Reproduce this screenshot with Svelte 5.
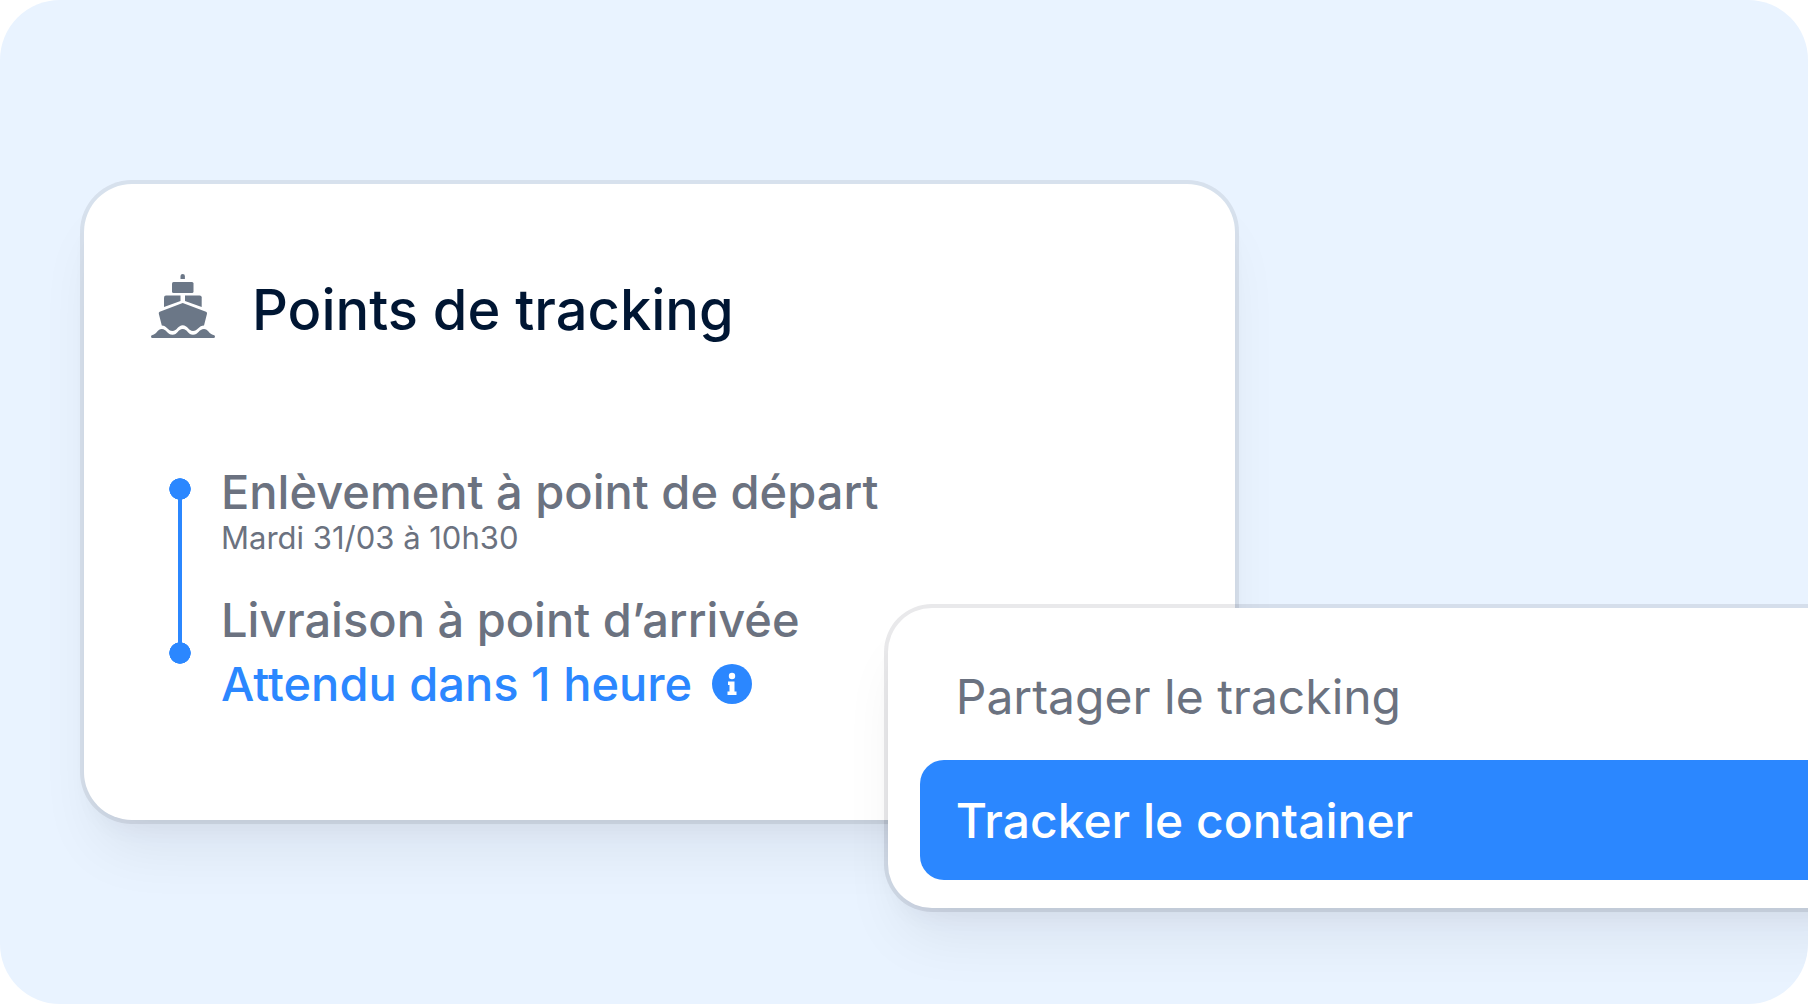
<script>
    const points = [
        { title: 'Enlèvement à point de départ', date: 'Mardi 31/03 à 10h30' },
        { title: 'Livraison à point d’arrivée', expected: 'Attendu dans 1 heure' }
    ];

    const actions = ['Partager le tracking', 'Tracker le container'];

    let selected = $state('Tracker le container');
</script>

<main class="stage">
    <section class="card">
        <header class="card-header">
            <svg class="ship" viewBox="0 0 64 64" aria-hidden="true">
                <path d="M29.500 5V2Q29.500 0 31.700 0T33.900 2V5Z" />
                <rect x="21" y="8" width="21.500" height="11" rx="1.500" />
                <path d="M13 33V23.500Q13 21.500 15 21.500H29.500V27Z" />
                <path d="M34 21.500H48.700Q50.700 21.500 50.700 23.500V33L34 27Z" />
                <path d="M31.700 29L55 37.800Q56.300 38.500 56 39.800L53 51.500C48 51.500 46.500 57 42 57C37.500 57 36.500 51.300 31.700 51.300C27 51.300 26 57 21.500 57C17 57 15.500 51.500 10.800 51.500L7.800 39.800Q7.500 38.500 8.700 37.800Z" />
                <path d="M1.500 61C5.500 60.500 6.500 55 10.800 55C15.500 55 16.500 60.800 21.500 60.800C26.500 60.800 27 55 31.700 55C36.500 55 37 60.800 42 60.800C47 60.800 48 55 53 55C57 55 58.500 60.500 62.500 61Q64 61.200 64 62.500Q64 64 62.500 64H1.500Q0 64 0 62.500Q0 61.200 1.500 61Z" />
            </svg>
            <h1>Points de tracking</h1>
        </header>

        <div class="timeline">
            <div class="rail"></div>
            <ol class="points">
                {#each points as point}
                    <li>
                        <h2>{point.title}</h2>
                        {#if point.date}
                            <p class="date">{point.date}</p>
                        {/if}
                        {#if point.expected}
                            <p class="expected">
                                {point.expected}
                                <svg class="info" viewBox="0 0 40 40" aria-hidden="true">
                                    <circle cx="20" cy="20" r="20" fill="#2b87ff" />
                                    <circle cx="20" cy="12" r="3.200" fill="#fff" />
                                    <path d="M16 17.500h6.500v10h2v3.500h-9v-3.500h2v-6.500h-1.500z" fill="#fff" />
                                </svg>
                            </p>
                        {/if}
                    </li>
                {/each}
            </ol>
        </div>
    </section>

    <div class="menu">
        {#each actions as action}
            <button class="menu-item" class:active={selected === action} onclick={() => (selected = action)}>
                {action}
            </button>
        {/each}
    </div>
</main>

<style>
    :global(body) {
        margin: 0;
        background: #fff;
    }

    .stage {
        position: relative;
        box-sizing: border-box;
        min-height: 100vh;
        padding: 184px 84px 96px;
        overflow: hidden;
        border-radius: 60px;
        background: #e9f3ff;
        font-family: Inter, "Liberation Sans", sans-serif;
        color: #6b7280;
    }

    .card {
        box-sizing: border-box;
        width: 70.2%;
        padding: 90px 67px 108px;
        border-radius: 48px;
        background: #fff;
        box-shadow:
            0 0 0 4px rgba(10, 10, 30, 0.08),
            0 40px 60px -12px rgba(10, 10, 30, 0.07),
            0 16px 24px -8px rgba(10, 10, 30, 0.04);
    }

    .card-header {
        display: flex;
        align-items: flex-start;
        gap: 37px;
    }

    .ship {
        width: 64px;
        height: 64px;
        fill: #6b7787;
    }

    h1,
    h2,
    p {
        margin: 0;
    }

    h1 {
        font-size: 56px;
        font-weight: 500;
        line-height: 72px;
        color: #001633;
    }

    .timeline {
        display: flex;
        gap: 30px;
        margin-top: 118px;
        padding-left: 18px;
    }

    /* vertical line with a dot at both ends */
    .rail {
        width: 22px;
        margin: 14px 0 48px;
        background:
            radial-gradient(circle closest-side, #2b87ff 95%, transparent) top / 22px 22px no-repeat,
            radial-gradient(circle closest-side, #2b87ff 95%, transparent) bottom / 22px 22px no-repeat,
            linear-gradient(#2b87ff, #2b87ff) center / 4px 90% no-repeat;
    }

    .points {
        display: flex;
        flex-direction: column;
        gap: 36px;
        margin: 0;
        padding: 0;
        list-style: none;
    }

    h2,
    .expected {
        font-size: 47px;
        font-weight: 500;
        line-height: 56px;
    }

    .date {
        font-size: 31px;
        line-height: 36px;
    }

    .expected {
        display: flex;
        align-items: center;
        gap: 20px;
        margin-top: 8px;
        color: #2b87ff;
    }

    .info {
        width: 40px;
        height: 40px;
    }

    /* runs past the right edge of the stage */
    .menu {
        position: absolute;
        right: -80px;
        bottom: 96px;
        left: 49.1%;
        display: flex;
        flex-direction: column;
        gap: 4px;
        padding: 28px 32px;
        border-radius: 44px;
        background: #fff;
        box-shadow:
            0 0 0 4px rgba(10, 10, 30, 0.09),
            0 40px 60px -12px rgba(10, 10, 30, 0.07),
            0 16px 24px -8px rgba(10, 10, 30, 0.04);
    }

    .menu-item {
        height: 120px;
        padding: 0 36px;
        border: 0;
        border-radius: 24px;
        background: none;
        font: 400 48px Inter, "Liberation Sans", sans-serif;
        text-align: left;
        color: #6b7280;
        cursor: pointer;
    }

    .menu-item.active {
        background: #2b87ff;
        font-weight: 500;
        color: #fff;
    }
</style>
